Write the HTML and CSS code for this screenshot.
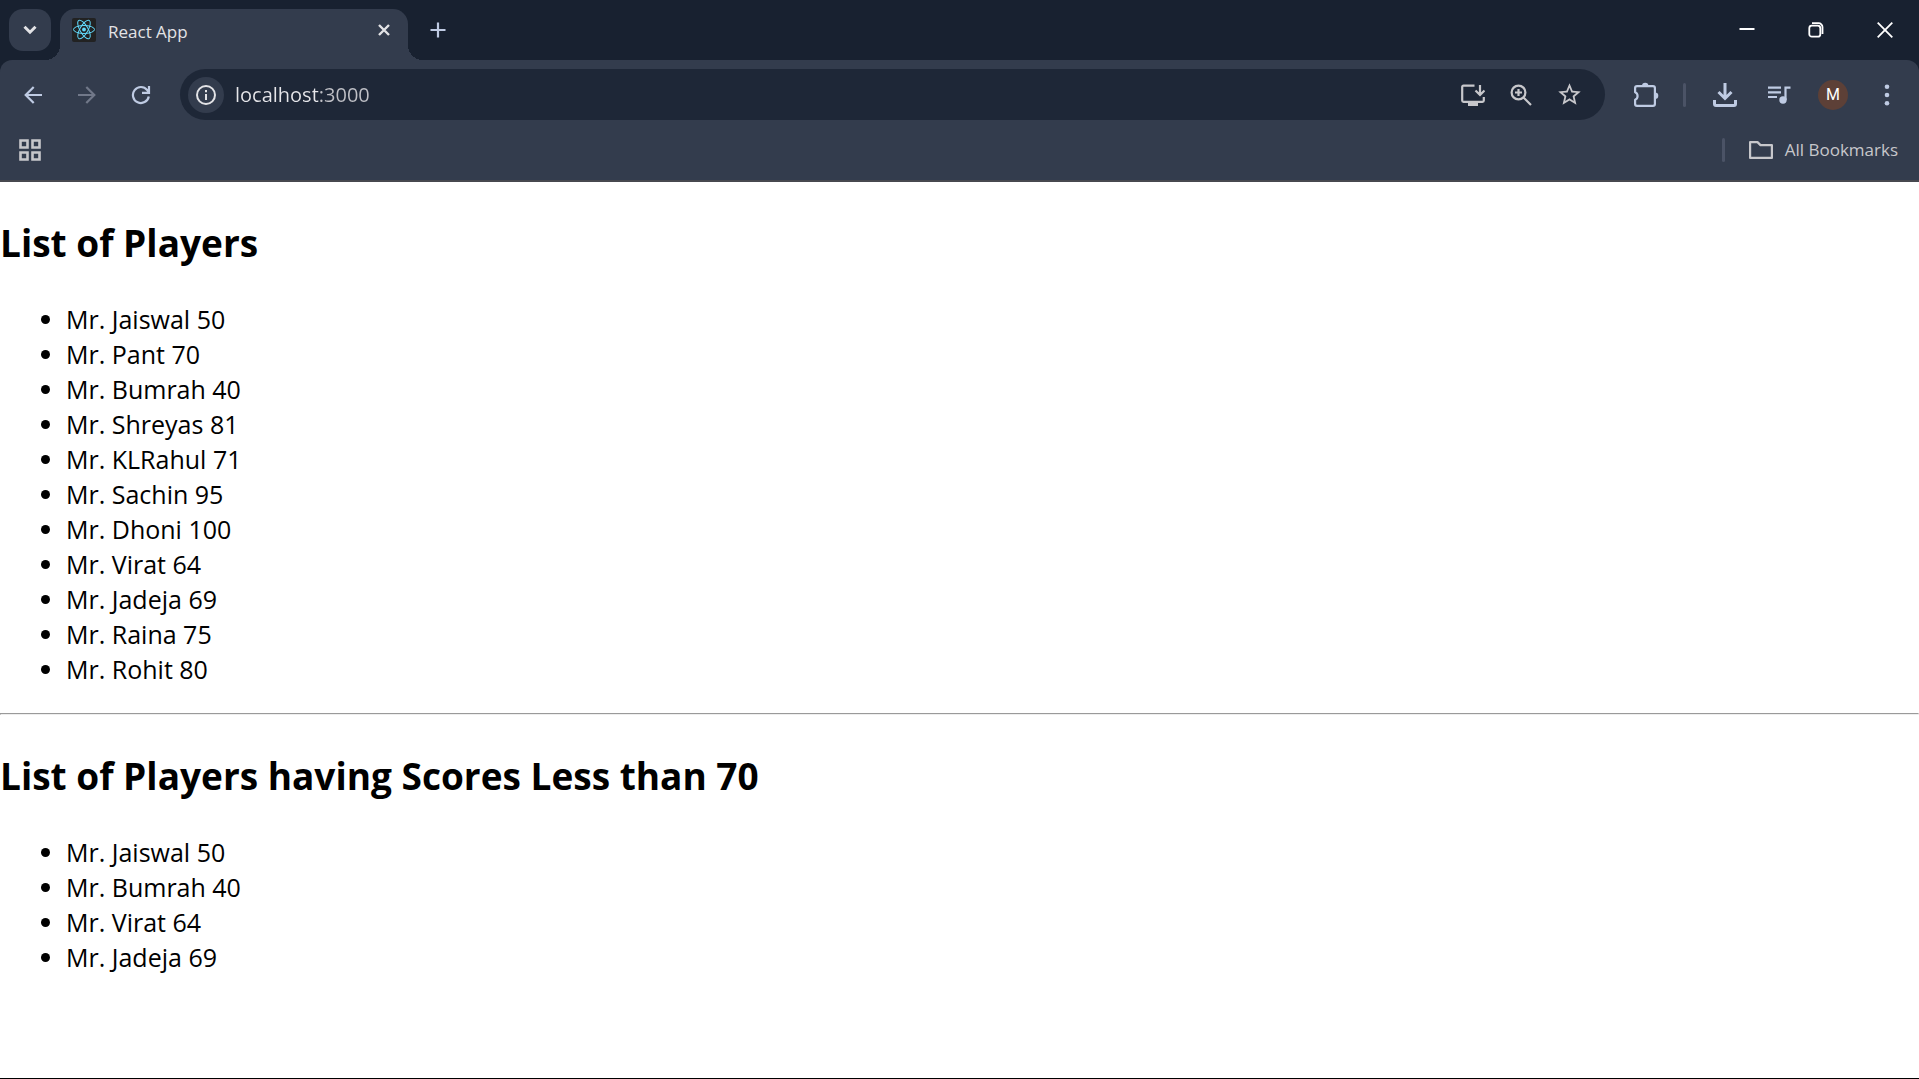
FILE: index.html
```html
<!DOCTYPE html>
<html lang="en">
<head>
  <meta charset="utf-8">
  <title>React App</title>
  <link rel="stylesheet" href="styles.css">
</head>
<body>
  <header class="browser">
    <div class="tab-strip">
      <button class="tab-search" type="button" aria-label="Search tabs">
        <svg width="14" height="10" viewBox="0 0 14 10" fill="none" stroke="currentColor" stroke-width="3"><path d="M1.500 1.800 7 7.200l5.500-5.400"/></svg>
      </button>
      <div class="tab">
        <svg class="favicon" width="24" height="24" viewBox="0 0 24 24" fill="none" stroke="#61dafb">
          <rect width="24" height="24" rx="2" fill="#222" stroke="none"/>
          <circle cx="12" cy="11.500" r="1.900" fill="#61dafb" stroke="none"/>
          <ellipse cx="12" cy="11.500" rx="10.500" ry="4"/>
          <ellipse cx="12" cy="11.500" rx="10.500" ry="4" transform="rotate(60 12 11.500)"/>
          <ellipse cx="12" cy="11.500" rx="10.500" ry="4" transform="rotate(120 12 11.500)"/>
        </svg>
        <span class="tab-title">React App</span>
        <button class="tab-close" type="button" aria-label="Close tab">
          <svg width="12" height="12" viewBox="0 0 12 12" fill="none" stroke="currentColor" stroke-width="2.400"><path d="M1 1l10 10M11 1 1 11"/></svg>
        </button>
      </div>
      <button class="new-tab" type="button" aria-label="New tab">
        <svg width="16" height="16" viewBox="0 0 16 16" stroke="currentColor" stroke-width="2.200"><path d="M8 .5v15M.5 8h15"/></svg>
      </button>
      <div class="window-controls">
        <button type="button" aria-label="Minimize">
          <svg width="16" height="16" viewBox="0 0 16 16" stroke="currentColor" stroke-width="2"><path d="M.5 7h15"/></svg>
        </button>
        <button type="button" aria-label="Restore">
          <svg width="16" height="16" viewBox="0 0 16 16" fill="none" stroke="currentColor" stroke-width="1.800"><rect x="1.300" y="3.700" width="11" height="11" rx="2.500"/><path d="M4 1.200h6.500a4 4 0 0 1 4 4V12"/></svg>
        </button>
        <button type="button" aria-label="Close window">
          <svg width="16" height="16" viewBox="0 0 16 16" stroke="currentColor" stroke-width="1.800"><path d="m.7.700 14.600 14.600M15.300.700.700 15.300"/></svg>
        </button>
      </div>
    </div>

    <div class="toolbar-area">
      <div class="toolbar">
        <nav class="nav-buttons">
          <button class="tool" type="button" aria-label="Back">
            <svg width="18" height="18" viewBox="0 0 18 18" fill="none" stroke="currentColor" stroke-width="2.200"><path d="M18 9H2M9.700 1 1.700 9l8 8"/></svg>
          </button>
          <button class="tool disabled" type="button" aria-label="Forward" disabled>
            <svg width="18" height="18" viewBox="0 0 18 18" fill="none" stroke="currentColor" stroke-width="2.200"><path d="M0 9h16M8.300 1l8 8-8 8"/></svg>
          </button>
          <button class="tool" type="button" aria-label="Reload">
            <svg width="20" height="20" viewBox="0 0 20 20" fill="none" stroke="currentColor" stroke-width="2.200"><path d="M17.800 11.500A8 8 0 1 1 16.200 5L18 7.500M18 1v6.800h-7"/></svg>
          </button>
        </nav>
        <form class="omnibox">
          <button class="site-info" type="button" aria-label="View site information">
            <svg width="20" height="20" viewBox="0 0 20 20" fill="none" stroke="currentColor" stroke-width="2"><circle cx="10" cy="10" r="9"/><path d="M10 9v6M10 5v2.200"/></svg>
          </button>
          <input class="url" type="text" value="localhost:3000" aria-label="Address" spellcheck="false">
          <button class="tool page-action" type="button" aria-label="Install app">
            <svg width="24" height="24" viewBox="0 0 24 24" fill="none" stroke="currentColor" stroke-width="2.200"><path d="M13.500 2.700H2.500Q1.200 2.700 1.200 4v13.500q0 1.300 1.300 1.300h19q1.300 0 1.300-1.300V14M19 2v9.500M14.500 7.500 19 12l4.500-4.500"/><path d="M7 19h10v4H7z" fill="currentColor" stroke="none"/></svg>
          </button>
          <button class="tool page-action" type="button" aria-label="Zoom">
            <svg width="22" height="22" viewBox="0 0 22 22" fill="none" stroke="currentColor" stroke-width="2.200"><circle cx="8.500" cy="8.500" r="6.900"/><path d="M13.500 13.500l7.500 7.500M8.500 5v7M5 8.500h7"/></svg>
          </button>
          <button class="tool page-action" type="button" aria-label="Bookmark this tab">
            <svg width="27" height="27" viewBox="0 0 24 24" fill="currentColor"><path d="M22 9.240l-7.190-.620L12 2 9.190 8.630 2 9.240l5.460 4.730L5.820 21 12 17.270 18.180 21l-1.630-7.030L22 9.240zM12 15.400l-3.760 2.270 1-4.280-3.320-2.880 4.380-.380L12 6.100l1.710 4.040 4.380.380-3.320 2.880 1 4.280L12 15.400z"/></svg>
          </button>
        </form>
        <div class="tools">
          <button class="tool" type="button" aria-label="Extensions">
            <svg width="26" height="28" viewBox="0 0 26 28" fill="none" stroke="currentColor" stroke-width="2.200"><path d="M4 5.100h16q1.900 0 1.900 1.900v16q0 1.900-1.900 1.900H4q-1.900 0-1.900-1.900v-4.300a4 4 0 0 0 0-7.400V7q0-1.900 1.900-1.900z" stroke-linejoin="round"/><path d="M9 5a3.200 3.200 0 0 1 6.400 0zM22 11.500a3.300 3.300 0 0 1 0 6.600z" fill="currentColor" stroke="none"/></svg>
          </button>
          <span class="divider"></span>
          <button class="tool" type="button" aria-label="Downloads">
            <svg width="24" height="24" viewBox="0 0 24 24" fill="none" stroke="currentColor" stroke-width="3"><path d="M12 0v15M5.500 9l6.500 6.500L18.500 9"/><path d="M1.500 17v4q0 1.500 1.500 1.500h18q1.500 0 1.500-1.500v-4"/></svg>
          </button>
          <button class="tool" type="button" aria-label="Media controls">
            <svg width="24" height="24" viewBox="0 0 24 24" fill="none" stroke="currentColor" stroke-width="2.200"><path d="M1 4.600h13M1 9.300h13M1 14h9M23.500 4.600h-5V17"/><circle cx="16" cy="17" r="3.700" fill="currentColor" stroke="none"/></svg>
          </button>
          <button class="tool" type="button" aria-label="Profile"><span class="avatar">M</span></button>
          <button class="tool" type="button" aria-label="Menu">
            <svg width="6" height="22" viewBox="0 0 6 22" fill="currentColor"><circle cx="3" cy="2.700" r="2.300"/><circle cx="3" cy="11" r="2.300"/><circle cx="3" cy="19.300" r="2.300"/></svg>
          </button>
        </div>
      </div>
      <div class="bookmarks">
        <button class="tool bookmark-apps" type="button" aria-label="Tab groups">
          <svg width="22" height="22" viewBox="0 0 22 22" fill="none" stroke="currentColor" stroke-width="2.600"><path d="M1.500 1.500h7v7h-7zM13.500 1.500h7v7h-7zM1.500 13.500h7v7h-7zM13.500 13.500h7v7h-7z"/></svg>
        </button>
        <span class="divider"></span>
        <button class="all-bookmarks" type="button">
          <svg width="24" height="18" viewBox="0 0 24 18" fill="none" stroke="currentColor" stroke-width="2.200" stroke-linejoin="round"><path d="M1.100 1.100h7.400l3 3h11.400v12.800H1.100z"/></svg>
          <span>All Bookmarks</span>
        </button>
      </div>
    </div>
  </header>

  <main class="page">
    <h2>List of Players</h2>
    <ul>
      <li>Mr. Jaiswal 50</li>
      <li>Mr. Pant 70</li>
      <li>Mr. Bumrah 40</li>
      <li>Mr. Shreyas 81</li>
      <li>Mr. KLRahul 71</li>
      <li>Mr. Sachin 95</li>
      <li>Mr. Dhoni 100</li>
      <li>Mr. Virat 64</li>
      <li>Mr. Jadeja 69</li>
      <li>Mr. Raina 75</li>
      <li>Mr. Rohit 80</li>
    </ul>
    <hr>
    <h2>List of Players having Scores Less than 70</h2>
    <ul>
      <li>Mr. Jaiswal 50</li>
      <li>Mr. Bumrah 40</li>
      <li>Mr. Virat 64</li>
      <li>Mr. Jadeja 69</li>
    </ul>
  </main>
</body>
</html>
```
FILE: styles.css
```css
:root {
  --frame: #182130;
  --toolbar: #333c4d;
  --field: #1e2737;
  --icon: #bfcbe3;
  --muted: #c7c7cb;
  --divider: #4b5366;
}

* {
  box-sizing: border-box;
}

body {
  display: flex;
  flex-direction: column;
  min-height: 100vh;
  margin: 0;
  border-bottom: 1px solid #000;
  background: #fff;
  color: #000;
  font-family: "Open Sans", "Noto Sans", sans-serif;
}

button {
  display: flex;
  align-items: center;
  justify-content: center;
  padding: 0;
  border: 0;
  background: none;
  color: inherit;
  font: inherit;
}

svg {
  display: block;
  flex: none;
}

/* Tab strip */
.browser {
  background: var(--frame);
  color: #e3e3e6;
}

.tab-strip {
  display: flex;
  align-items: flex-start;
  height: 60px;
  padding-left: 9px;
}

.tab-search {
  width: 42px;
  height: 42px;
  margin: 9px 9px 0 0;
  border-radius: 14px;
  background: var(--toolbar);
}

.tab {
  position: relative;
  display: flex;
  align-items: center;
  gap: 12px;
  width: 348px;
  height: 51px;
  margin-top: 9px;
  padding: 0 12px 9px;
  border-radius: 15px 15px 0 0;
  background: var(--toolbar);
}

.tab::before,
.tab::after {
  content: "";
  position: absolute;
  bottom: 0;
  width: 15px;
  height: 15px;
}

.tab::before {
  right: 100%;
  background: radial-gradient(circle at 0 0, transparent 15px, var(--toolbar) 15px);
}

.tab::after {
  left: 100%;
  background: radial-gradient(circle at 100% 0, transparent 15px, var(--toolbar) 15px);
}

.tab-title {
  flex: 1;
  padding-top: 3px;
  font-size: 17px;
  line-height: 24px;
}

.tab-close {
  width: 24px;
  height: 24px;
}

.new-tab {
  width: 42px;
  height: 42px;
  margin: 9px 0 0 9px;
  color: var(--icon);
}

.window-controls {
  display: flex;
  margin-left: auto;
  color: #fff;
}

.window-controls button {
  width: 69px;
  height: 60px;
}

/* Toolbar */
.toolbar-area {
  border-bottom: 2px solid #47484f;
  border-radius: 12px 12px 0 0;
  background: var(--toolbar);
}

.toolbar {
  display: flex;
  align-items: center;
  padding: 9px 11px 9px 12px;
}

.nav-buttons {
  display: flex;
  gap: 12px;
  margin-right: 18px;
}

.tool {
  width: 42px;
  height: 42px;
  color: var(--icon);
}

.disabled {
  color: #717889;
}

.omnibox {
  display: flex;
  flex: 1;
  align-items: center;
  gap: 6px;
  height: 51px;
  margin-right: 20px;
  padding: 0 15px 0 8px;
  border-radius: 26px;
  background: var(--field);
}

.site-info {
  width: 36px;
  height: 36px;
  border-radius: 50%;
  background: var(--toolbar);
}

/* The host is brighter than the port that follows it */
.url {
  flex: 1;
  min-width: 0;
  padding: 0 0 0 5px;
  border: 0;
  outline: 0;
  background: linear-gradient(90deg, #e6e6ea 88px, #bfc0c6 88px);
  background-clip: text;
  color: transparent;
  font: inherit;
  font-size: 20px;
  line-height: 28px;
}

.page-action {
  color: var(--muted);
}

.tools {
  display: flex;
  align-items: center;
  gap: 12px;
}

.divider {
  width: 3px;
  height: 24px;
  margin: 0 6px 0 4px;
  border-radius: 2px;
  background: var(--divider);
}

.avatar {
  width: 30px;
  height: 30px;
  border-radius: 50%;
  background: #5d4037;
  color: #fff;
  font-family: Roboto, sans-serif;
  font-size: 16px;
  line-height: 30px;
}

/* Bookmarks bar */
.bookmarks {
  display: flex;
  align-items: center;
  height: 51px;
  padding: 0 21px 9px 9px;
}

.bookmark-apps {
  margin-right: auto;
  color: var(--muted);
}

.all-bookmarks {
  gap: 12px;
  margin-left: 18px;
  color: var(--muted);
  font-size: 17px;
  line-height: 24px;
}

/* Page */
.page {
  flex: 1;
  font-size: 25px;
  line-height: 35px;
}

.page h2 {
  margin: 34px 0 33px;
  font-size: 37px;
  line-height: 53px;
}

.page ul {
  margin: 26px 0;
  padding-left: 66px;
}

.page hr {
  margin: 25px 0 0;
  border: 1px solid;
  border-color: #9a9a9a #eee #eee #9a9a9a;
}
```
